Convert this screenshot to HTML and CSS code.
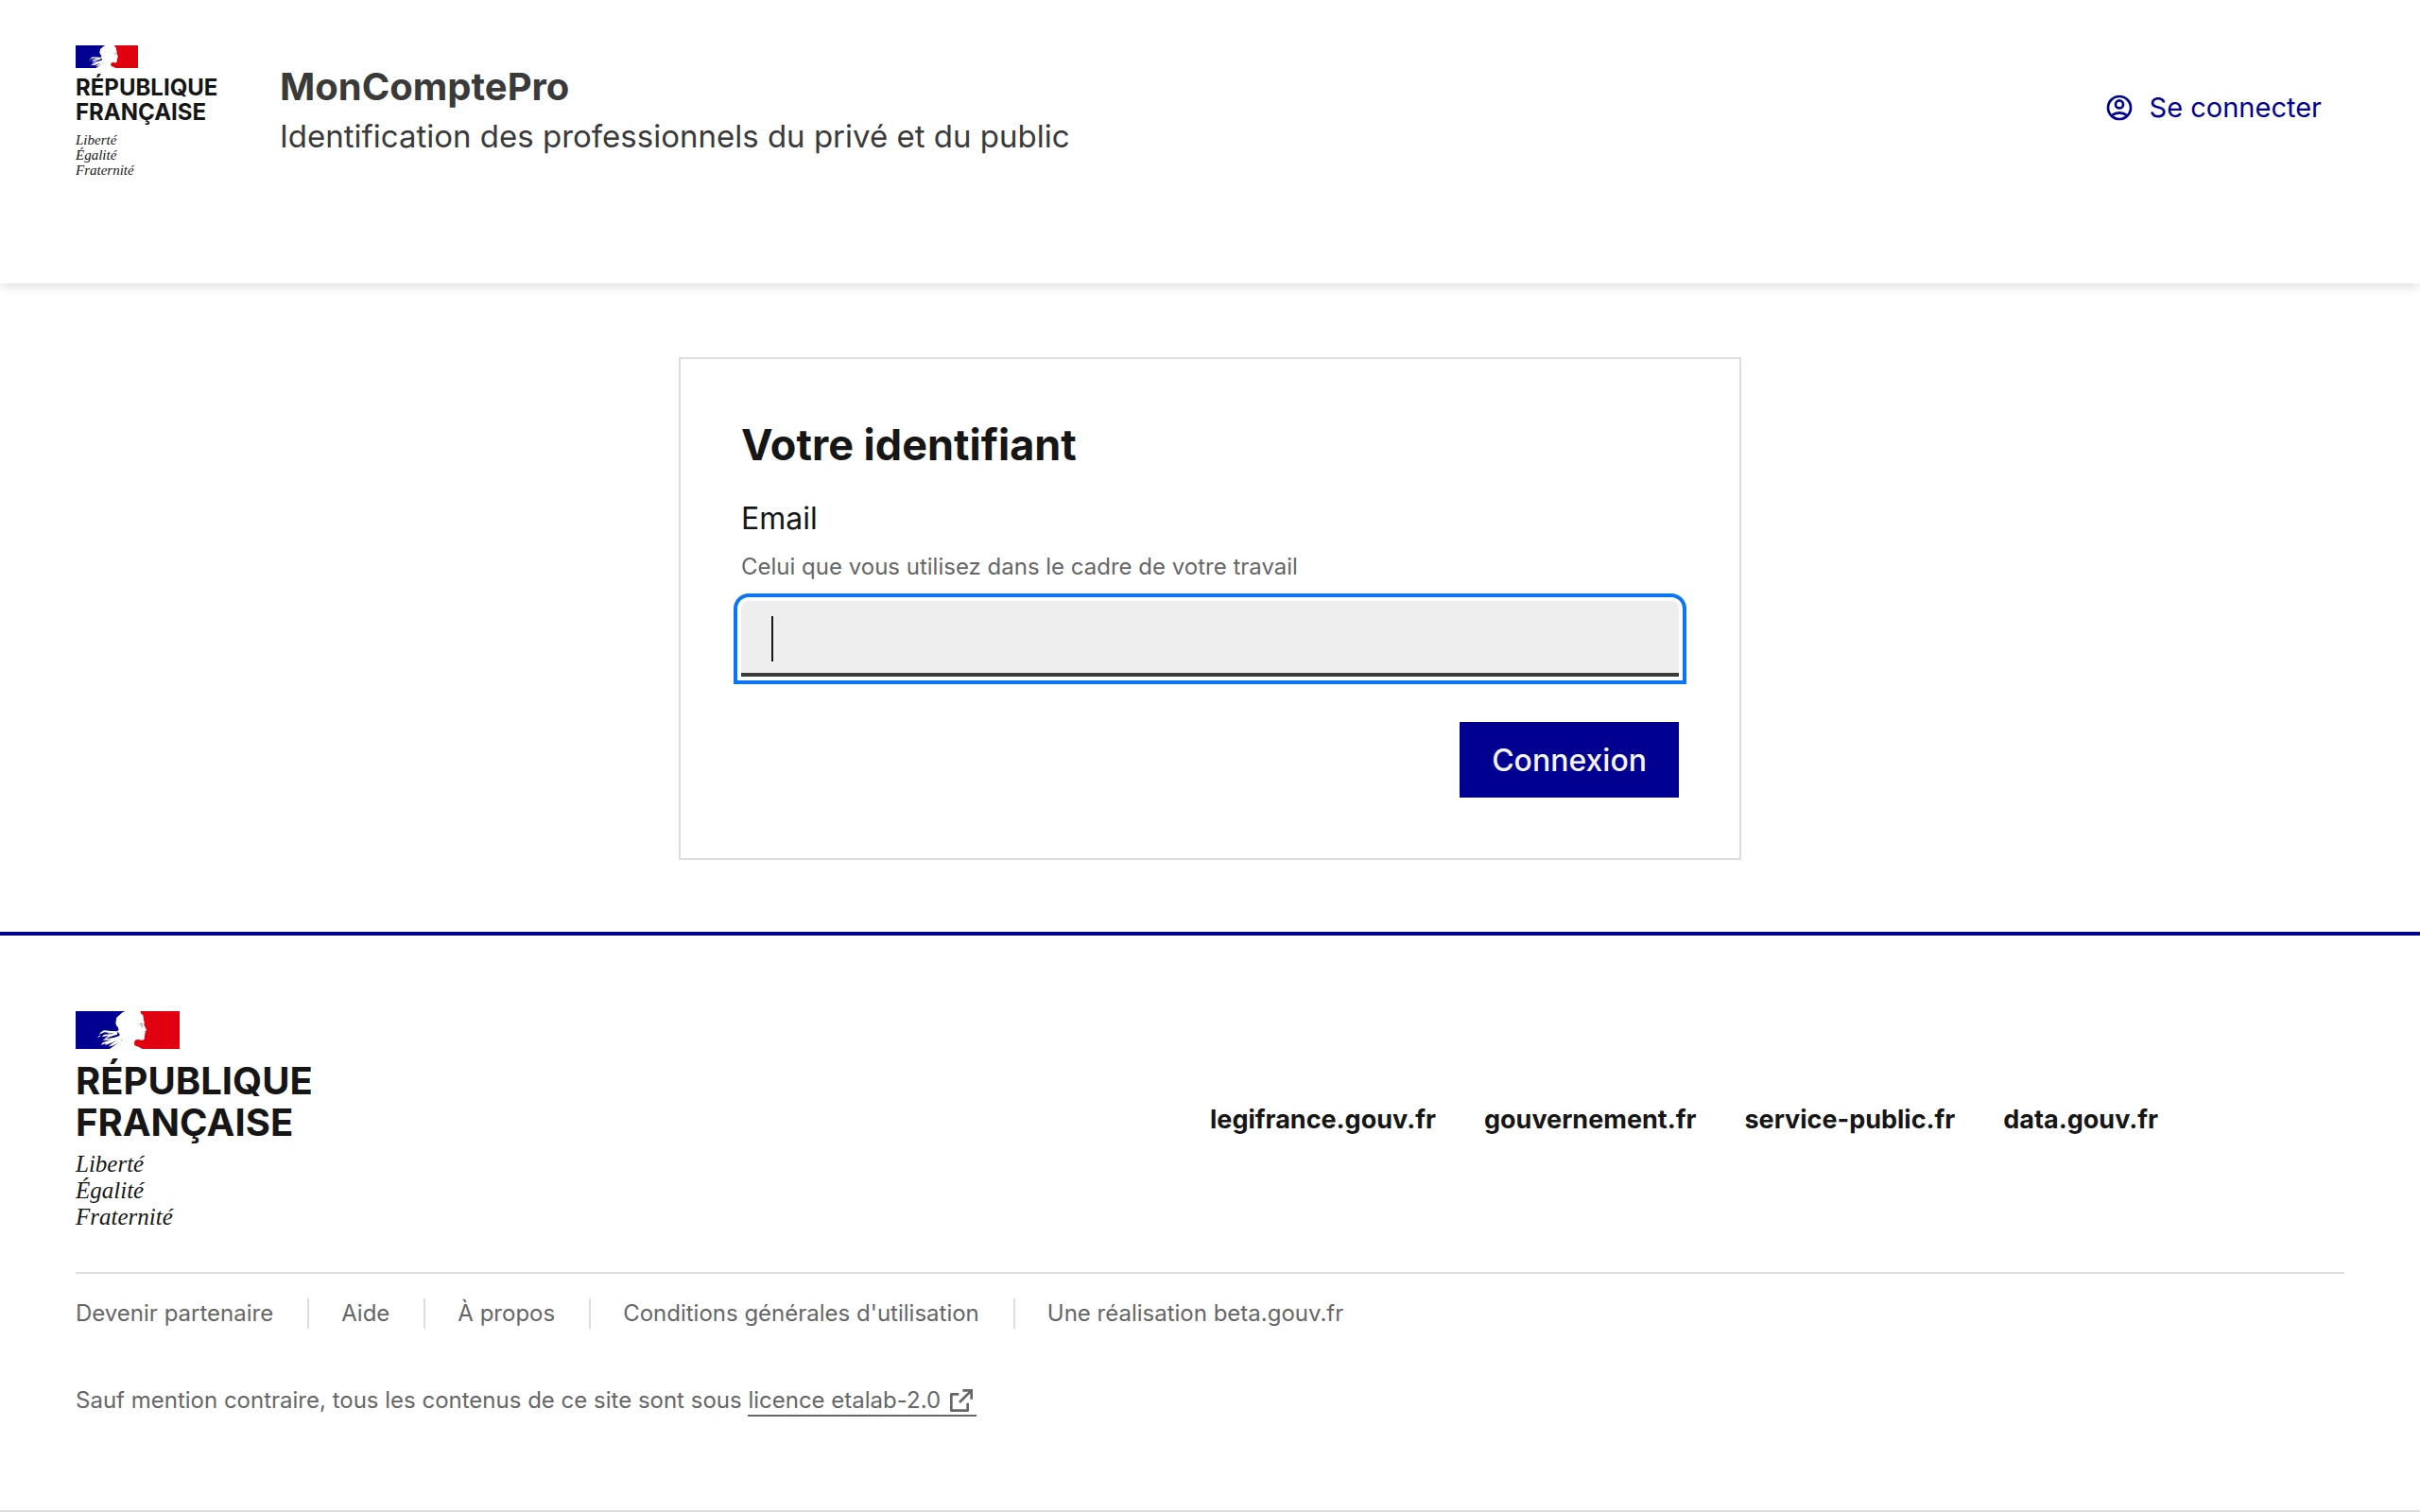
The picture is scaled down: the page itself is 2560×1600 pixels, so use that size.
FILE: index.html
```html
<!DOCTYPE html>
<html lang="fr">
<head>
  <meta charset="utf-8">
  <meta name="viewport" content="width=device-width, initial-scale=1">
  <title>MonComptePro</title>
  <link rel="stylesheet" href="styles.css">
</head>
<body>
  <svg class="sprite" aria-hidden="true">
    <symbol id="flag" viewBox="0 0 330 120">
      <path fill="#fff" d="M0 0h330v120H0z"/>
      <path fill="#000091" d="M0 0H158Q148 3 142 10L130 20 127 38Q128 46 134 51L137 60 132 62 140 74 138 82 148 92 130 104 108 120H0Z"/>
      <path fill="#e1000f" d="M205 0H330V120H212Q200 113 187 109L186 98Q188 91 196 90L210 92Q219 92 219 85L218 79 221 74 219 71 222 67 220 63 225 61Q226 59 222 54L217 43Q220 36 216 28L214 13 208 8Z"/>
      <path fill="#fff" d="M134 64L112 63 90 61Q80 65 74 74L92 67 108 69 88 76 84 82 104 78 88 90 112 80 132 74ZM78 77Q72 79 68 83L79 80ZM146 76L122 84 98 87 84 94 112 91 86 100 80 107 96 103 94 108 104 104 120 98 134 92 116 102 104 112 116 110 146 96Z"/>
      <path fill="none" stroke="#000091" stroke-width="2" d="M96 74L118 70M104 86L136 76"/>
      <path fill="none" stroke="#777" stroke-width="3" d="M203 42l9-3M208 46l5-1M209 51l3-1"/>
    </symbol>
  </svg>

  <header class="header">
    <div class="logo logo-small">
      <svg class="logo-flag" aria-hidden="true"><use href="#flag"/></svg>
      <p class="logo-name">RÉPUBLIQUE<br>FRANÇAISE</p>
      <p class="logo-motto">Liberté<br>Égalité<br>Fraternité</p>
    </div>
    <div class="header-main">
      <div class="service">
        <p class="service-title">MonComptePro</p>
        <p class="service-tagline">Identification des professionnels du privé et du public</p>
      </div>
      <a class="login-link" href="#">
        <svg class="icon" viewBox="0 0 24 24" fill="none" stroke="currentColor" stroke-width="2" aria-hidden="true">
          <circle cx="12" cy="12" r="9"/><circle cx="12" cy="9.3" r="3"/><path d="M5.6 18.2Q12 13.8 18.4 18.2"/>
        </svg>
        Se connecter
      </a>
    </div>
  </header>

  <main class="main">
    <form class="card">
      <h1 class="card-title">Votre identifiant</h1>
      <label class="label" for="email">Email</label>
      <p class="hint" id="email-hint">Celui que vous utilisez dans le cadre de votre travail</p>
      <div class="field">
        <input class="input" id="email" type="email" aria-describedby="email-hint">
        <span class="caret"></span>
      </div>
      <button class="button" type="submit">Connexion</button>
    </form>
  </main>

  <footer class="footer">
    <div class="footer-body">
      <div class="footer-brand">
        <div class="logo logo-large">
          <svg class="logo-flag" aria-hidden="true"><use href="#flag"/></svg>
          <p class="logo-name">RÉPUBLIQUE<br>FRANÇAISE</p>
          <p class="logo-motto">Liberté<br>Égalité<br>Fraternité</p>
        </div>
      </div>
      <ul class="site-links">
        <li><a href="#">legifrance.gouv.fr</a></li>
        <li><a href="#">gouvernement.fr</a></li>
        <li><a href="#">service-public.fr</a></li>
        <li><a href="#">data.gouv.fr</a></li>
      </ul>
    </div>
    <div class="footer-bottom">
      <ul class="legal-links">
        <li><a href="#">Devenir partenaire</a></li>
        <li><a href="#">Aide</a></li>
        <li><a href="#">À propos</a></li>
        <li><a href="#">Conditions générales d'utilisation</a></li>
        <li><a href="#">Une réalisation beta.gouv.fr</a></li>
      </ul>
      <p class="license">Sauf mention contraire, tous les contenus de ce site sont sous <a class="license-link" href="#">licence etalab-2.0<svg class="icon" viewBox="0 0 24 24" fill="currentColor" aria-hidden="true"><path d="M10 6v2H5v11h11v-5h2v6a1 1 0 0 1-1 1H4a1 1 0 0 1-1-1V7a1 1 0 0 1 1-1h6zm11-3v8h-2V6.413l-7.793 7.794-1.414-1.414L17.585 5H13V3h8z"/></svg></a></p>
    </div>
  </footer>
</body>
</html>
```
FILE: styles.css
```css
* {
  box-sizing: border-box;
}

body {
  margin: 0;
  background: #fff;
  color: #161616;
  font-family: Inter, "Noto Sans", sans-serif;
  font-size: 24px;
}

h1,
p,
ul {
  margin: 0;
  padding: 0;
}

ul {
  list-style: none;
}

a {
  color: inherit;
  text-decoration: none;
}

.sprite {
  display: none;
}

.icon {
  flex: none;
  width: 32px;
  height: 32px;
}

/* State logo */
.logo-flag {
  display: block;
}

.logo-name {
  font-weight: 700;
}

.logo-motto {
  margin-top: 8px;
  font-family: "Liberation Serif", serif;
  font-style: italic;
}

.logo-small {
  flex: none;
  min-width: 152px;
}

.logo-small .logo-flag {
  width: 66px;
  height: 24px;
  margin-bottom: 8px;
}

.logo-small .logo-name {
  font-size: 24px;
  line-height: 26px;
}

.logo-small .logo-motto {
  font-size: 15px;
  line-height: 16px;
}

.logo-large .logo-flag {
  width: 110px;
  height: 40px;
  margin-bottom: 12px;
}

.logo-large .logo-name {
  font-size: 40px;
  line-height: 44px;
}

.logo-large .logo-motto {
  font-size: 25px;
  line-height: 28px;
}

/* Header */
.header {
  display: flex;
  align-items: flex-start;
  gap: 64px;
  padding: 48px 80px 112px;
  box-shadow: 0 2px 12px rgba(0, 0, 18, 0.16);
}

.header-main {
  display: flex;
  flex: 1;
  align-items: center;
  justify-content: space-between;
  padding-top: 16px;
}

.service {
  color: #3a3a3a;
}

.service-title {
  font-size: 40px;
  font-weight: 700;
  line-height: 56px;
}

.service-tagline {
  font-size: 33px;
  line-height: 48px;
}

.login-link {
  display: flex;
  align-items: center;
  gap: 16px;
  padding: 0 24px 4px;
  color: #000091;
  font-size: 29px;
  line-height: 48px;
}

/* Login card */
.main {
  padding: 78px 80px 76px;
}

.card {
  display: flex;
  flex-direction: column;
  max-width: 1124px;
  margin: 0 auto;
  padding: 64px;
  border: 2px solid #ddd;
}

.card-title {
  margin-bottom: 28px;
  font-size: 45px;
  font-weight: 700;
  line-height: 54px;
}

.label {
  font-size: 32px;
  line-height: 46px;
}

.hint {
  margin: 8px 0 16px;
  color: #666;
  line-height: 40px;
}

.field {
  position: relative;
}

.input {
  display: block;
  width: 100%;
  height: 80px;
  padding: 16px 32px;
  border: 0;
  border-bottom: 4px solid #3a3a3a;
  border-radius: 8px 8px 0 0;
  outline: 4px solid #0a76f6;
  outline-offset: 4px;
  background: #eee;
  color: #3a3a3a;
  font: inherit;
  font-size: 32px;
}

.caret {
  position: absolute;
  top: 16px;
  left: 32px;
  width: 2px;
  height: 48px;
  background: #161616;
}

.button {
  align-self: flex-end;
  min-height: 80px;
  margin-top: 48px;
  padding: 0 34px;
  border: 0;
  background: #000091;
  color: #f5f5fe;
  font: inherit;
  font-size: 32px;
  font-weight: 500;
}

/* Footer */
.footer {
  padding: 80px 80px 96px;
  border-top: 4px solid #000091;
  border-bottom: 2px solid #ddd;
}

.footer-body {
  display: flex;
  align-items: center;
  margin-bottom: 44px;
}

.footer-brand,
.site-links {
  flex: 1 1 50%;
}

.site-links {
  display: flex;
  flex-wrap: wrap;
  gap: 16px 51px;
  padding-bottom: 4px;
  font-size: 27px;
  font-weight: 700;
}

.footer-bottom {
  padding-top: 26px;
  border-top: 2px solid #ddd;
  color: #666;
}

.legal-links {
  display: flex;
  flex-wrap: wrap;
  line-height: 32px;
}

.legal-links li + li {
  margin-left: 36px;
  padding-left: 34px;
  border-left: 2px solid #ddd;
}

.license {
  margin-top: 56px;
  line-height: 40px;
}

.license-link {
  display: inline-flex;
  align-items: center;
  gap: 6px;
  border-bottom: 2px solid #666;
  line-height: 30px;
}

.license-link .icon {
  margin: -2px 0;
}
```
